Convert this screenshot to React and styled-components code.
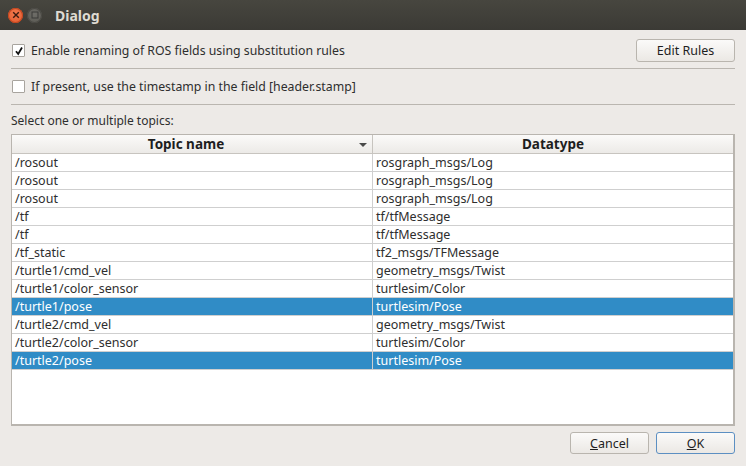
import React from "react";
import styled, { createGlobalStyle } from "styled-components";

const GlobalStyle = createGlobalStyle`
  html, body {
    margin: 0;
    padding: 0;
    background: #edeae7;
  }
  body {
    font-family: "Noto Sans", "DejaVu Sans", sans-serif;
    font-size: 12px;
    color: #2e2e2e;
  }
`;

const topics = [
  ["/rosout", "rosgraph_msgs/Log"],
  ["/rosout", "rosgraph_msgs/Log"],
  ["/rosout", "rosgraph_msgs/Log"],
  ["/tf", "tf/tfMessage"],
  ["/tf", "tf/tfMessage"],
  ["/tf_static", "tf2_msgs/TFMessage"],
  ["/turtle1/cmd_vel", "geometry_msgs/Twist"],
  ["/turtle1/color_sensor", "turtlesim/Color"],
  ["/turtle1/pose", "turtlesim/Pose", true],
  ["/turtle2/cmd_vel", "geometry_msgs/Twist"],
  ["/turtle2/color_sensor", "turtlesim/Color"],
  ["/turtle2/pose", "turtlesim/Pose", true],
];

function Dialog() {
  return (
    <Window>
      <TitleBar>
        <WinButton $kind="close">
          <svg width="8" height="8" viewBox="0 0 8 8">
            <path d="M1.2 1.2 L6.8 6.8 M6.8 1.2 L1.2 6.8" stroke="#3a1a10" strokeWidth="1.4" />
          </svg>
        </WinButton>
        <WinButton $kind="min">
          <svg width="8" height="8" viewBox="0 0 8 8">
            <rect x="1" y="1" width="6" height="6" fill="none" stroke="#3a3a38" strokeWidth="1" />
          </svg>
        </WinButton>
        <Title>Dialog</Title>
      </TitleBar>

      <Content>
        <OptionRow>
          <CheckLabel>
            <Check>
              <svg width="10" height="10" viewBox="0 0 10 10">
                <path d="M2 5.2 L4.2 8 L8 1.5" fill="none" stroke="#111" strokeWidth="1.8" />
              </svg>
            </Check>
            Enable renaming of ROS fields using substitution rules
          </CheckLabel>
          <Button $wide>Edit Rules</Button>
        </OptionRow>
        <Separator $gap={6} />
        <OptionRow $tall>
          <CheckLabel>
            <Check />
            If present, use the timestamp in the field [header.stamp]
          </CheckLabel>
        </OptionRow>
        <Separator />
        <Caption>Select one or multiple topics:</Caption>

        <TableFrame>
          <HeaderRow>
            <HeaderCell $first>
              Topic name
              <SortArrow />
            </HeaderCell>
            <HeaderCell>Datatype</HeaderCell>
          </HeaderRow>
          {topics.map(([name, type, selected], i) => (
            <Row key={i} $selected={selected}>
              <Cell $first>{name}</Cell>
              <Cell>{type}</Cell>
            </Row>
          ))}
        </TableFrame>

        <ButtonBar>
          <Button>
            <u>C</u>ancel
          </Button>
          <Button $default>
            <u>O</u>K
          </Button>
        </ButtonBar>
      </Content>
    </Window>
  );
}

export default function App() {
  return (
    <>
      <GlobalStyle />
      <Dialog />
    </>
  );
}

const Window = styled.div`
  width: 746px;
  height: 466px;
  display: flex;
  flex-direction: column;
  background: #edeae7;
  overflow: hidden;
`;

const TitleBar = styled.div`
  height: 30px;
  flex: none;
  display: flex;
  align-items: center;
  padding-left: 8px;
  background: linear-gradient(#47463f, #3b3a35);
  box-sizing: border-box;
`;

const WinButton = styled.div`
  width: 15px;
  height: 15px;
  border-radius: 50%;
  margin-right: 4px;
  display: flex;
  align-items: center;
  justify-content: center;
  background: ${(p) =>
    p.$kind === "close"
      ? "radial-gradient(circle at 50% 40%, #f37b4f, #e0562a)"
      : "radial-gradient(circle at 50% 40%, #6e6d68, #57564f)"};
  box-shadow: inset 0 0 0 1px ${(p) => (p.$kind === "close" ? "#c2461f" : "#4a4944")};
`;

const Title = styled.div`
  margin-left: 9px;
  font-family: "Noto Sans", sans-serif;
  font-weight: bold;
  font-size: 14px;
  color: #dfdbd2;
`;

const Content = styled.div`
  flex: 1;
  display: flex;
  flex-direction: column;
  padding: 9px 11px 0 11px;
`;

const OptionRow = styled.div`
  height: ${(p) => (p.$tall ? "35px" : "23px")};
  flex: none;
  display: flex;
  align-items: center;
  justify-content: space-between;
`;

const CheckLabel = styled.label`
  display: flex;
  align-items: center;
  font-size: 12.3px;
  color: #2e2e2e;
  padding-left: 1px;
`;

const Check = styled.span`
  width: 11px;
  height: 11px;
  margin-right: 6px;
  border: 1px solid #a8a49e;
  border-radius: 1px;
  background: #fff;
  display: flex;
  align-items: center;
  justify-content: center;
`;

const Separator = styled.div`
  height: 1px;
  flex: none;
  background: #bab6b0;
  margin-top: ${(p) => p.$gap || 0}px;
`;

const Caption = styled.div`
  height: 29px;
  flex: none;
  display: flex;
  align-items: center;
  padding-top: 2px;
  box-sizing: border-box;
`;

const TableFrame = styled.div`
  width: 724px;
  height: 292px;
  flex: none;
  box-sizing: border-box;
  border: 1px solid #b9b5af;
  border-right-width: 2px;
  border-bottom-width: 2px;
  background: #fff;
`;

const HeaderRow = styled.div`
  display: flex;
  height: 18px;
  border-bottom: 1px solid #c7c4bf;
  background: linear-gradient(#fbfaf9, #eceae7);
`;

const HeaderCell = styled.div`
  position: relative;
  width: ${(p) => (p.$first ? "361px" : "auto")};
  flex: ${(p) => (p.$first ? "none" : "1")};
  display: flex;
  align-items: center;
  justify-content: center;
  box-sizing: border-box;
  padding-right: ${(p) => (p.$first ? "12px" : "0")};
  font-weight: bold;
  font-size: 13.5px;
  color: #1e1e1e;
  border-right: ${(p) => (p.$first ? "1px solid #c7c4bf" : "none")};
`;

const SortArrow = styled.span`
  position: absolute;
  right: 5px;
  top: 8px;
  width: 0;
  height: 0;
  border-left: 4px solid transparent;
  border-right: 4px solid transparent;
  border-top: 4px solid #4a4a4a;
`;

const Row = styled.div`
  display: flex;
  height: 17px;
  font-size: 12.5px;
  border-bottom: 1px solid #cfcfcf;
  background: ${(p) => (p.$selected ? "#308cc6" : "#fff")};
  color: ${(p) => (p.$selected ? "#fff" : "#2e2e2e")};
`;

const Cell = styled.div`
  width: ${(p) => (p.$first ? "361px" : "auto")};
  flex: ${(p) => (p.$first ? "none" : "1")};
  display: flex;
  align-items: center;
  padding-left: 3px;
  box-sizing: border-box;
  white-space: nowrap;
  border-right: ${(p) => (p.$first ? "1px solid #cfcfcf" : "none")};
`;

const ButtonBar = styled.div`
  display: flex;
  justify-content: flex-end;
  gap: 7px;
  margin-top: 6px;
`;

const Button = styled.button`
  width: ${(p) => (p.$wide ? "99px" : "79px")};
  height: ${(p) => (p.$wide ? "23px" : "22px")};
  font-family: "Noto Sans", "DejaVu Sans", sans-serif;
  font-size: 12.5px;
  color: #1e1e1e;
  border: 1px solid ${(p) => (p.$default ? "#5c8fc2" : "#b9b5ae")};
  border-radius: 3px;
  background: linear-gradient(#fbfaf9, #ebe8e4);
  padding: 0;
  u {
    text-decoration: underline;
  }
`;
